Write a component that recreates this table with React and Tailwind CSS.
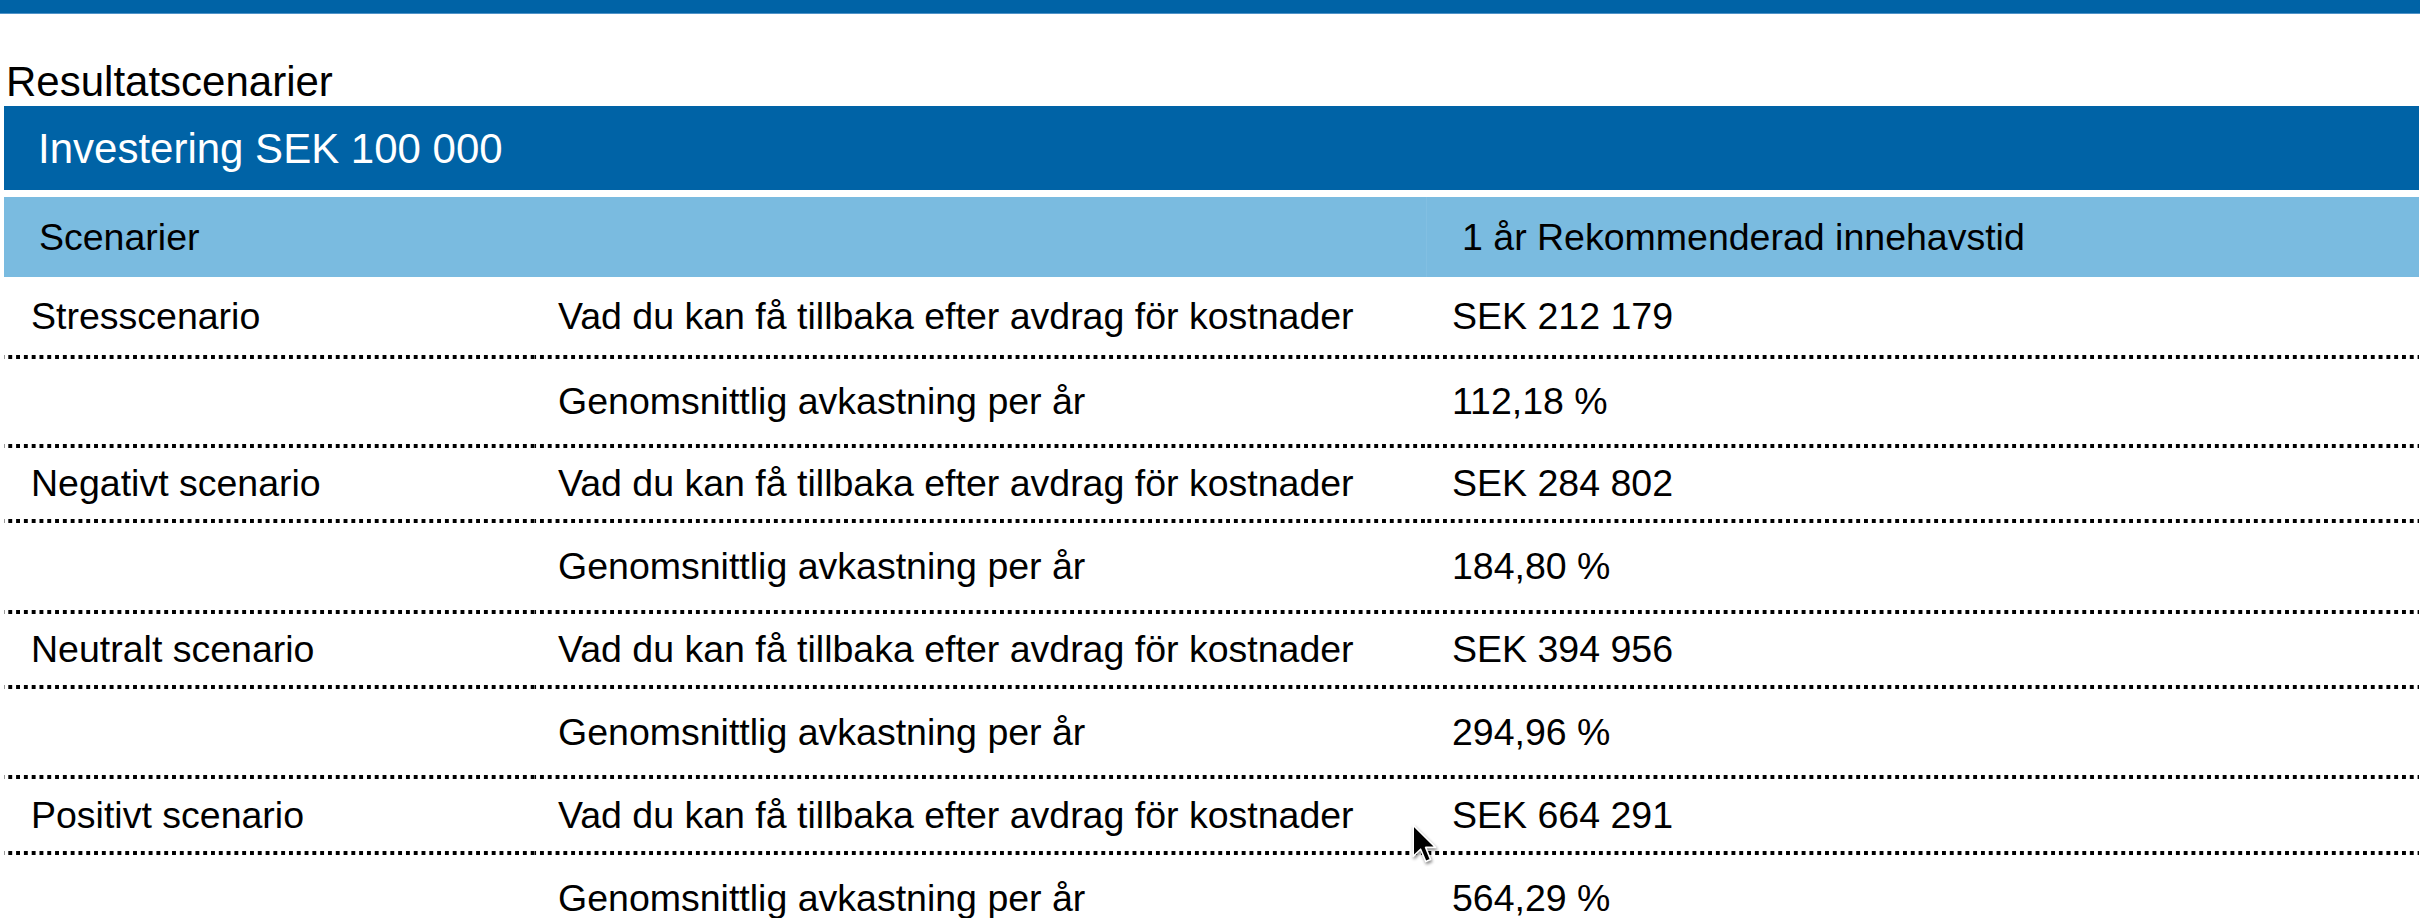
import React from "react";

const rows = [
  { name: "Stresscenario", label: "Vad du kan få tillbaka efter avdrag för kostnader", value: "SEK 212 179", h: "h-[82px]" },
  { name: "", label: "Genomsnittlig avkastning per år", value: "112,18 %", h: "h-[89px]" },
  { name: "Negativt scenario", label: "Vad du kan få tillbaka efter avdrag för kostnader", value: "SEK 284 802", h: "h-[75px]" },
  { name: "", label: "Genomsnittlig avkastning per år", value: "184,80 %", h: "h-[91px]" },
  { name: "Neutralt scenario", label: "Vad du kan få tillbaka efter avdrag för kostnader", value: "SEK 394 956", h: "h-[75px]" },
  { name: "", label: "Genomsnittlig avkastning per år", value: "294,96 %", h: "h-[90px]" },
  { name: "Positivt scenario", label: "Vad du kan få tillbaka efter avdrag för kostnader", value: "SEK 664 291", h: "h-[76px]" },
  { name: "", label: "Genomsnittlig avkastning per år", value: "564,29 %", h: "h-[90px]" },
];

const dotted =
  "bg-[linear-gradient(to_right,#000_4px,transparent_4px)] bg-[length:7.8px_4px] bg-bottom bg-repeat-x";

function Cell({ children, h, pad }) {
  return (
    <div className={`${h} ${pad} ${dotted} flex items-center pb-[4px] whitespace-nowrap overflow-hidden`}>
      {children}
    </div>
  );
}

export default function App() {
  return (
    <div className="relative w-[2420px] h-[918px] overflow-hidden bg-white text-black font-['Liberation_Sans',Arial,sans-serif]">
      <div className="h-[14px] w-full bg-[#0063a6] border-b border-[#4f93c8]" />
      <div className="mt-[44px] pl-[6px] text-[42px] leading-[48px]">Resultatscenarier</div>
      <div className="pl-[4px] pr-[1px]">
        <div className="h-[84px] bg-[#0063a6] flex items-center pl-[34px] text-white text-[42px]">
          Investering SEK 100 000
        </div>
        <div className="mt-[7px] h-[80px] bg-[#7abbe0] grid grid-cols-[531px_891px_1fr] text-[37.5px]">
          <div className="flex items-center pl-[35px]">Scenarier</div>
          <div />
          <div className="flex items-center pl-[35px] border-l border-[#82bfe2]">1 år Rekommenderad innehavstid</div>
        </div>
        <div className="grid grid-cols-[531px_891px_1fr] text-[37.5px]">
          {rows.map((r, i) => (
            <React.Fragment key={i}>
              <Cell h={r.h} pad="pl-[27px]">{r.name}</Cell>
              <Cell h={r.h} pad="pl-[23px]">{r.label}</Cell>
              <Cell h={r.h} pad="pl-[26px]">{r.value}</Cell>
            </React.Fragment>
          ))}
        </div>
      </div>
      <svg
        className="absolute left-[1412px] top-[824px] drop-shadow-[1px_2px_1.5px_rgba(0,0,0,0.45)]"
        width="26"
        height="40"
        viewBox="0 0 13 20"
      >
        <path
          d="M0.6 0.6 L0.6 16.2 L4.3 12.6 L6.9 18.8 L9.3 17.8 L6.8 11.7 L11.8 11.7 Z"
          fill="#000"
          stroke="#fff"
          strokeWidth="0.8"
          strokeLinejoin="round"
        />
      </svg>
    </div>
  );
}
